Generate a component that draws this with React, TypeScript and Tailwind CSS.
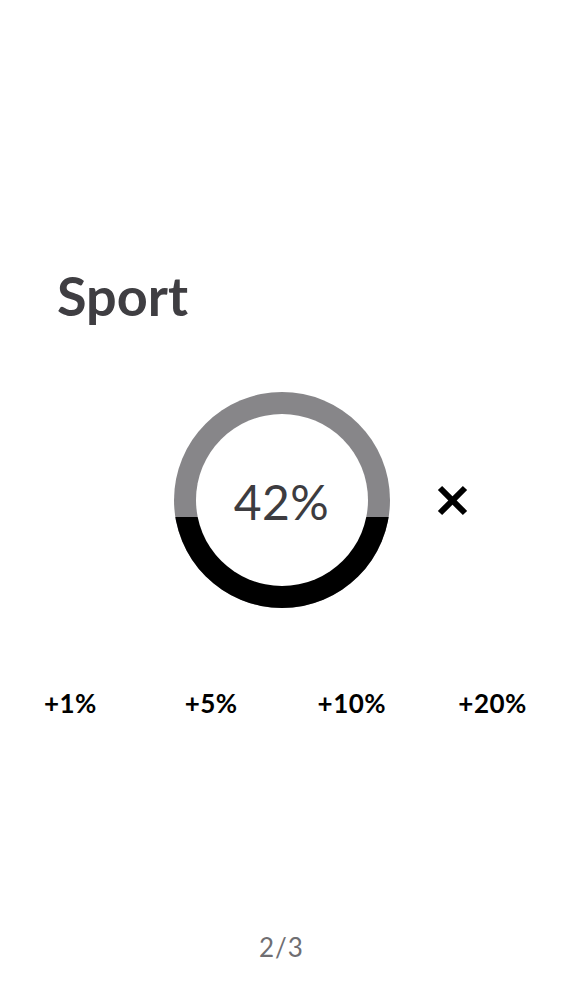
const steps = ["+1%", "+5%", "+10%", "+20%"];

const FillRing = ({ percent }: { percent: number }) => {
  return (
    <div className="relative w-[216px] h-[216px] rounded-full overflow-hidden bg-[#878689] flex items-end">
      <div className="w-full bg-black" style={{ height: `${percent}%` }} />
      <div className="absolute inset-[22px] rounded-full bg-white flex items-center justify-center">
        <span className="text-[48px] leading-none text-[#3d3c40] pt-[3px] tracking-[0.5px]">{percent}%</span>
      </div>
    </div>
  );
};

const App = () => {
  return (
    <main
      className="w-full h-[1000px] bg-white flex flex-col"
      style={{ fontFamily: "Lato, 'Open Sans', sans-serif" }}
    >
      <h1 className="mt-[264px] pl-[57px] text-[54px] leading-[64px] font-bold text-[#3f3e42]">
        Sport
      </h1>

      <div className="mt-[64px] grid grid-cols-[1fr_216px_1fr]">
        <div />
        <FillRing percent={42} />
        <div className="flex items-center pl-[47px]">
          <button aria-label="close">
            <svg width="31" height="31" viewBox="0 0 31 31">
              <path d="M3 3 L28 28 M28 3 L3 28" stroke="#000" strokeWidth="6" />
            </svg>
          </button>
        </div>
      </div>

      <div className="mt-[80px] grid grid-cols-4">
        {steps.map((s) => (
          <button key={s} className="text-[26px] leading-[30px] font-bold text-black text-center tracking-[0.5px]">
            {s}
          </button>
        ))}
      </div>

      <div className="mt-[214px] text-center text-[26px] leading-[30px] text-[#6f6e72] tracking-[1px]">2/3</div>
    </main>
  );
};

export default App;
